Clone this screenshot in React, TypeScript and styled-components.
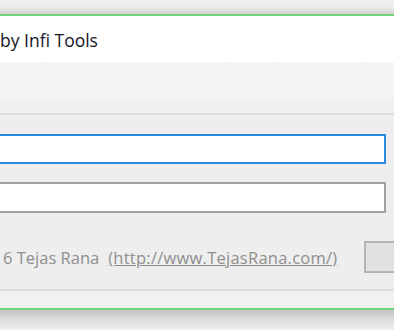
import React from "react";
import styled, { createGlobalStyle } from "styled-components";

const GlobalStyle = createGlobalStyle`
  html, body {
    margin: 0;
    padding: 0;
    width: 394px;
    height: 330px;
    overflow: hidden;
    background: #eeeeee;
  }
  body {
    font-family: "Open Sans", "Noto Sans", sans-serif;
  }
`;

const Page = styled.div`
  width: 394px;
  height: 330px;
  display: flex;
  flex-direction: column;
  overflow: hidden;
`;

const TopShadow = styled.div`
  height: 14px;
  flex-shrink: 0;
  background: linear-gradient(#f2f2f2 0%, #ebebeb 50%, #d4d4d4 100%);
`;

const BottomShadow = styled.div`
  height: 20px;
  flex-shrink: 0;
  background: linear-gradient(#c2c2c2 0%, #dcdcdc 45%, #efefef 100%);
`;

const Window = styled.div`
  display: flex;
  flex-direction: column;
  border-top: 2px solid #74d27c;
  border-bottom: 2px solid #74d27c;
  background: #eeeeee;
`;

const Header = styled.div`
  height: 46px;
  background: #ffffff;
  display: flex;
  align-items: center;
  padding-top: 2px;
  box-sizing: border-box;
`;

const Title = styled.div`
  font-size: 17.5px;
  color: #161628;
  white-space: nowrap;
`;

const Ribbon = styled.div`
  height: 37px;
  display: flex;
  background: #f4f4f4;
`;

const RibbonCell = styled.div<{ $w: number }>`
  width: ${(p) => p.$w}px;
  flex-shrink: 0;
  border-right: 1px solid #f1f1f1;
  background: #f5f5f5;
`;

const RibbonBase = styled.div`
  height: 14px;
  background: #efefef;
  border-bottom: 2px solid #dcdcdc;
`;

const Body = styled.div`
  display: flex;
  flex-direction: column;
  padding: 19px 8px 0 0;
  background: #eeeeee;
`;

const TextInput = styled.input<{ $focused?: boolean }>`
  display: block;
  margin-left: -6px;
  height: ${(p) => (p.$focused ? 30 : 31)}px;
  box-sizing: border-box;
  background: #ffffff;
  border: 2px solid ${(p) => (p.$focused ? "#2c8ae2" : "#a2a2a2")};
  outline: none;
  padding: 0 6px;
  font: inherit;
  & + & {
    margin-top: 18px;
  }
`;

const Footer = styled.div`
  display: flex;
  align-items: center;
  height: 32px;
  margin-top: 28px;
  margin-right: -53px;
  padding-left: 3px;
`;

const Credit = styled.span`
  font-size: 16.5px;
  color: #8e8e8e;
  white-space: nowrap;
`;

const Link = styled.a`
  font-size: 16.5px;
  letter-spacing: 0.25px;
  color: #8e8e8e;
  text-decoration: underline;
  white-space: nowrap;
  margin-left: 9px;
`;

const Button = styled.button`
  margin-left: auto;
  width: 75px;
  height: 32px;
  flex-shrink: 0;
  box-sizing: border-box;
  background: #e1e1e1;
  border: 2px solid #b4b4b4;
`;

const Separator = styled.div`
  height: 2px;
  margin-top: 16px;
  background: #dddddd;
`;

const StatusArea = styled.div`
  height: 17px;
  background: #f1f1f1;
`;

export default function App() {
  return (
    <>
      <GlobalStyle />
      <Page>
        <TopShadow />
        <Window>
          <Header>
            <Title>by Infi Tools</Title>
          </Header>
          <Ribbon>
            <RibbonCell $w={45} />
            <RibbonCell $w={182} />
            <RibbonCell $w={45} />
            <RibbonCell $w={92} />
            <RibbonCell $w={40} />
          </Ribbon>
          <RibbonBase />
          <Body>
            <TextInput $focused />
            <TextInput />
            <Footer>
              <Credit>6 Tejas Rana</Credit>
              <Link href="#">(http://www.TejasRana.com/)</Link>
              <Button />
            </Footer>
          </Body>
          <Separator />
          <StatusArea />
        </Window>
        <BottomShadow />
      </Page>
    </>
  );
}
